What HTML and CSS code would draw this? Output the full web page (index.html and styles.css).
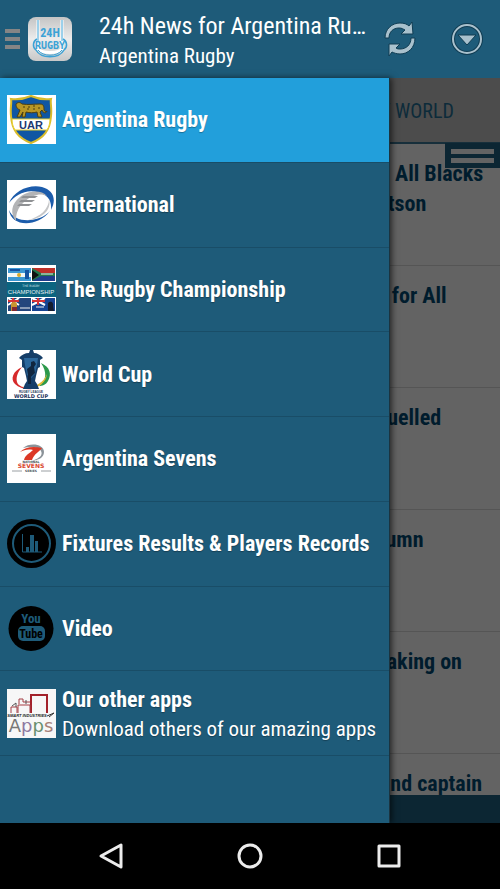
FILE: index.html
```html
<!DOCTYPE html>
<html lang="en">
<head>
    <meta charset="UTF-8">
    <meta name="viewport" content="width=device-width, initial-scale=1.0">
    <title>24h News for Argentina Rugby</title>
    <link rel="stylesheet" href="styles.css">
</head>
<body>
    <!-- Action bar -->
    <header class="topbar">
        <button class="icon-btn toggle" aria-label="Close menu">
            <span></span>
            <span></span>
            <span></span>
        </button>
        <svg class="logo" viewBox="0 0 46 46" aria-hidden="true">
            <defs>
                <linearGradient id="logoBg" x1="0" y1="0" x2="0" y2="1">
                    <stop offset="0" stop-color="#c4c4c4"/>
                    <stop offset=".5" stop-color="#ececec"/>
                    <stop offset="1" stop-color="#c8c8c8"/>
                </linearGradient>
            </defs>
            <rect x="1" y="1" width="44" height="44" rx="8" fill="url(#logoBg)"/>
            <path d="M11 4v28c0 6 24 6 24 0V4" fill="none" stroke="#fff" stroke-width="3"/>
            <path d="M11 4v21M35 4v21" stroke="#3ba2d6" stroke-width="1"/>
            <path d="M10 23c-4 2-5 8-1 11M36 23c4 2 5 8 1 11" fill="none" stroke="#3ba2d6" stroke-width="1.500"/>
            <path d="M11 34c5 7 19 7 24 0" fill="none" stroke="#3ba2d6" stroke-width="1"/>
            <path d="M9 34c5 9 23 9 28 0" fill="none" stroke="#3ba2d6" stroke-width="1.500"/>
            <text x="23" y="21" class="logo-top">24H</text>
            <text x="23" y="33" class="logo-bottom">RUGBY</text>
        </svg>
        <div class="titles">
            <h1>24h News for Argentina Ru…</h1>
            <p>Argentina Rugby</p>
        </div>
        <button class="icon-btn" aria-label="Refresh">
            <svg width="34" height="38" viewBox="0 0 34 38" aria-hidden="true">
                <g fill="#a9c1cd" stroke="#103c52" stroke-width="1">
                    <path d="M2 18C2 9 9 3 17 3c4 0 7 1 9 3l3-4 1 12H18l4-4c-2-1-3-2-6-2-6 0-10 4-10 10z"/>
                    <path d="M32 18c0 10-7 16-15 16-3 0-6-1-8-2l-3 4V24h11l-4 4c1 1 3 1 4 1 6 0 11-4 11-11z"/>
                </g>
            </svg>
        </button>
        <button class="icon-btn" aria-label="More options">
            <svg width="34" height="34" viewBox="0 0 34 34" aria-hidden="true">
                <circle cx="17" cy="17" r="14" fill="none" stroke="#103c52" stroke-width="4"/>
                <circle cx="17" cy="17" r="14" fill="none" stroke="#a9c1cd" stroke-width="2"/>
                <path d="M8 13h18l-9 10z" fill="#a9c1cd" stroke="#103c52" stroke-width="1"/>
            </svg>
        </button>
    </header>

    <main class="stage">
        <!-- News feed, dimmed under the drawer -->
        <section class="feed">
            <div class="tab">Y WORLD</div>
            <article><h2>s All Blacks<br>rtson</h2></article>
            <article><h2>t for All</h2></article>
            <article><h2>fuelled</h2></article>
            <article><h2>lumn</h2></article>
            <article><h2>taking on</h2></article>
            <article><h2>and captain</h2></article>
        </section>
        <div class="feed-footer"></div>
        <button class="feed-menu" aria-label="Sections">
            <span></span>
            <span></span>
        </button>

        <!-- Drawer -->
        <nav class="drawer">
            <ul>
                <li><a href="#" class="active">
                    <svg class="thumb" viewBox="0 0 49 49" aria-hidden="true">
                        <rect width="49" height="49" fill="#fff"/>
                        <path d="M4 4c7 1 13 0 20-3 7 3 13 4 20 3-1 4 1 8 0 17-1 14-7 22-20 27C11 43 5 35 4 21 3 12 5 8 4 4z" fill="#0f56a3" stroke="#d8bb2a" stroke-width="2"/>
                        <path d="M5 24h38c0 4-1 8-3 11H8c-2-3-3-7-3-11z" fill="#fff" stroke="#e8cf2c" stroke-width="1"/>
                        <path d="M9 9c2-2 4-2 6 0 6 1 12 0 18 0 4 0 4 3 4 6 1 2 2 2 3 1-1 3-4 2-5-1l-2 2 2 5h-4l-1-5c-4 1-7 1-11 0l-1 5h-3l1-5-3 5h-3l3-7c-2-1-4-2-4-6z" fill="#b79725" stroke="#4b3f12" stroke-width="1"/>
                        <path d="M16 12h2m3 0h2m3-1h2m3 2h2m-13 1h2m4 0h2" stroke="#4b3f12" stroke-width="1"/>
                        <text x="24" y="34" class="t-uar">UAR</text>
                    </svg>
                    <span class="label"><b>Argentina Rugby</b></span>
                </a></li>
                <li><a href="#">
                    <svg class="thumb" viewBox="0 0 49 49" aria-hidden="true">
                        <rect width="49" height="49" fill="#fff"/>
                        <path d="M2 23C7 11 22 4 35 7c11 3 15 12 9 23 1-10-4-16-14-18C19 9 8 15 2 23z" fill="#1c5cab"/>
                        <path d="M2 30c2 17 28 18 41 1-9 11-35 14-41-1z" fill="#1c5cab"/>
                        <path d="M40 16c-6-7-20-5-27 1-9 7-10 17-4 24 0-8 2-13 7-18 5-4 6-6 14-8 4-1 7 0 10 1z" fill="#b3b4b6"/>
                        <path d="M16 16h15l-3 2H14zm-2 4h14l-3 2H12zm-2 4h13l-3 2H10z" fill="#8f9194"/>
                        <path d="M42 19c0 10-9 18-21 21 14-1 24-10 21-21z" fill="#c5c6c8"/>
                    </svg>
                    <span class="label"><b>International</b></span>
                </a></li>
                <li><a href="#">
                    <svg class="thumb" viewBox="0 0 49 49" aria-hidden="true">
                        <rect width="49" height="49" fill="#fff"/>
                        <path d="M1 3h23v13H1z" fill="#3c97d2"/>
                        <path d="M1 8h23v4H1z" fill="#f4f7f5"/>
                        <circle cx="12" cy="10" r="2" fill="#d9a928"/>
                        <path d="M3 4h10v2H3zM18 5h4v9h-4z" fill="#1552a0"/>
                        <path d="M25 3h23v6H25z" fill="#bd2f28"/>
                        <path d="M25 10h23v6H25z" fill="#203d8d"/>
                        <path d="M25 3l9 5h14v3H34l-9 5z" fill="#23764b"/>
                        <path d="M25 5l7 5-7 5z" fill="#111"/>
                        <path d="M34 9h12" stroke="#eee" stroke-width="1"/>
                        <path d="M0 17h49v15H0z" fill="#0b6480"/>
                        <text x="24" y="22" class="t-small">THE RUGBY</text>
                        <text x="24" y="29" class="t-champ">CHAMPIONSHIP</text>
                        <path d="M1 33h23v13H1z" fill="#24457c"/>
                        <path d="M25 33h23v13H25z" fill="#164392"/>
                        <path d="M1 33l11 7m0-7L1 40m24-7l13 7m0-7l-13 7" stroke="#fff" stroke-width="2"/>
                        <path d="M6 33v7m-5-4h11m19-3v7m-6-4h13" stroke="#d63336" stroke-width="2"/>
                        <path d="M4 39c1-3 5-3 6 0v7H4z" fill="#c79531"/>
                        <path d="M5 42h5v4H5z" fill="#822832"/>
                        <path d="M41 38c3-3 6 0 5 3l1 5h-6z" fill="#151d2e"/>
                        <path d="M13 43h10m6-1h8" stroke="#f0f0f0" stroke-width="1"/>
                    </svg>
                    <span class="label"><b>The Rugby Championship</b></span>
                </a></li>
                <li><a href="#">
                    <svg class="thumb" viewBox="0 0 49 49" aria-hidden="true">
                        <rect width="49" height="49" fill="#fff"/>
                        <path d="M15 17C6 21 3 29 8 34c4 4 11 6 17 5-8-1-14-3-15-7s0-9 5-15z" fill="#d62a2b"/>
                        <path d="M34 13c9 4 11 11 7 18-2 4-6 5-9 5 8-6 8-14 2-23z" fill="#2c994b"/>
                        <path d="M14 36c10 4 22-2 26-12-1 11-14 18-26 12z" fill="#e3b833"/>
                        <path d="M23 0h3l1 3c3 0 7 2 9 5l-3 2v7l-2 1-2 8-1 5 2 3 2 5H16l2-5 2-3-1-5-2-8-2-1v-7l-3-2c2-3 6-5 10-5z" fill="#153e68"/>
                        <path d="M17 8h14l-1 7-2 9-4 4-4-3-2-10z" fill="#2b679b"/>
                        <path d="M24 12l3-1 2 3-2 3 1 6-4 4v7h-3v-9l-1-6 4-3z" fill="#10263f"/>
                        <text x="24" y="43" class="t-league">RUGBY LEAGUE</text>
                        <text x="24" y="48" class="t-cup">WORLD CUP</text>
                    </svg>
                    <span class="label"><b>World Cup</b></span>
                </a></li>
                <li><a href="#">
                    <svg class="thumb" viewBox="0 0 49 49" aria-hidden="true">
                        <rect width="49" height="49" fill="#fff"/>
                        <path d="M16 14c7-6 21-4 21 4 0 6-6 8-12 9 8-3 11-6 9-10-2-4-10-5-18-3z" fill="#8b9399"/>
                        <path d="M13 18c5-5 13-6 22-4-3 4-8 6-10 12h-8c1-5 6-7 9-10-5-1-9 0-13 2z" fill="#dc3826"/>
                        <text x="24" y="29" class="t-nat">NATIONAL</text>
                        <text x="24" y="34" class="t-sevens">SEVENS</text>
                        <text x="24" y="38" class="t-nat">SERIES</text>
                        <path d="M5 37h10m19 0h10" stroke="#9a9fa3" stroke-width="1"/>
                    </svg>
                    <span class="label"><b>Argentina Sevens</b></span>
                </a></li>
                <li><a href="#">
                    <svg class="thumb" viewBox="0 0 49 49" aria-hidden="true">
                        <circle cx="24.500" cy="24.500" r="24.500" fill="#000"/>
                        <circle cx="24.500" cy="24.500" r="18.500" fill="none" stroke="#1e5b79" stroke-width="2"/>
                        <path d="M15.500 15v18H35" fill="none" stroke="#1e5b79" stroke-width="1"/>
                        <path d="M19 28h3v5h-3zM23 16h4v17h-4zM28 22h3v11h-3z" fill="#1e5b79"/>
                    </svg>
                    <span class="label"><b>Fixtures Results &amp; Players Records</b></span>
                </a></li>
                <li><a href="#">
                    <svg class="thumb" viewBox="0 0 49 49" aria-hidden="true">
                        <circle cx="24" cy="24.500" r="22.500" fill="#000"/>
                        <rect x="11" y="22" width="27" height="15" rx="5" fill="#1e5b79"/>
                        <text x="24" y="19" class="t-you">You</text>
                        <text x="24" y="34" class="t-tube">Tube</text>
                    </svg>
                    <span class="label"><b>Video</b></span>
                </a></li>
                <li><a href="#">
                    <svg class="thumb" viewBox="0 0 49 49" aria-hidden="true">
                        <rect width="49" height="49" fill="#f7f7f7"/>
                        <path d="M24 24V6h16v18" fill="none" stroke="#a3222b" stroke-width="2"/>
                        <path d="M4 24v-6h6v6m1 0v-8h12v8m-11-9v-5h4v3h7" fill="none" stroke="#a53f45" stroke-width="1"/>
                        <path d="M5 17l4-3v4m10-7v4" fill="none" stroke="#555" stroke-width="1"/>
                        <path d="M40 27l7-3-5 4" fill="none" stroke="#333" stroke-width="1"/>
                        <text x="20" y="28" class="t-smart">SMART INDUSTRIES</text>
                        <text x="24" y="43" class="t-apps"><tspan fill="#777">A</tspan><tspan fill="#8e79a1">p</tspan><tspan fill="#68906f">p</tspan><tspan fill="#a68077">s</tspan></text>
                    </svg>
                    <span class="label"><b>Our other apps</b><small>Download others of our amazing apps</small></span>
                </a></li>
            </ul>
        </nav>
    </main>

    <!-- System navigation -->
    <footer class="navbar">
        <button aria-label="Back">
            <svg width="28" height="28" viewBox="0 0 28 28"><path d="M4 14L24 3v22z"/></svg>
        </button>
        <button aria-label="Home">
            <svg width="28" height="28" viewBox="0 0 28 28"><circle cx="14" cy="14" r="11"/></svg>
        </button>
        <button aria-label="Recent apps">
            <svg width="28" height="28" viewBox="0 0 28 28"><rect x="4" y="4" width="20" height="20"/></svg>
        </button>
    </footer>
</body>
</html>
```

FILE: styles.css
```css
* {
    box-sizing: border-box;
}
body {
    margin: 0;
    height: 100vh;
    display: flex;
    flex-direction: column;
    overflow: hidden;
    background-color: #000;
    font-family: 'Roboto Condensed', 'Liberation Sans Narrow', Roboto, sans-serif;
    color: #fff;
}
h1, h2, p, ul {
    margin: 0;
    padding: 0;
}
button {
    padding: 0;
    border: none;
    background: none;
    cursor: pointer;
}
svg {
    display: block;
}

/* Action bar */
.topbar {
    height: 78px;
    flex: none;
    display: flex;
    align-items: center;
    padding: 0 16px 0 5px;
    background-color: #1e5b79;
}
.toggle {
    display: flex;
    flex-direction: column;
    gap: 4px;
}
.toggle span {
    width: 15px;
    height: 4px;
    background-color: #858585;
}
.logo {
    width: 46px;
    height: 46px;
    margin-left: 7px;
}
.titles {
    flex: 1;
    min-width: 0;
    margin-left: 26px;
    padding-top: 2px;
    white-space: nowrap;
}
.titles h1 {
    font-size: 24px;
    line-height: 32px;
    font-weight: 400;
}
.titles p {
    font-size: 21px;
    line-height: 28px;
}
.topbar .icon-btn + .icon-btn {
    margin-left: 33px;
}

.stage {
    position: relative;
    flex: 1;
    min-height: 0;
    display: flex;
    flex-direction: column;
}

/* Feed */
.feed {
    flex: 1;
    min-height: 0;
    overflow: hidden;
    background-color: #636363;
    color: #001c2d;
}
.tab {
    height: 66px;
    padding-left: 76%;
    border-bottom: 2px solid #172f3b;
    background-color: #4c4c4c;
    color: #0d2b3a;
    font-size: 20px;
    line-height: 66px;
}
.feed article {
    height: 122px;
    padding: 15px 0 0 76%;
    border-bottom: 1px solid #555;
}
.feed h2 {
    font-size: 22px;
    line-height: 30px;
    font-weight: 700;
    white-space: nowrap;
}
.feed-footer {
    height: 28px;
    flex: none;
    background-color: #0c2633;
}
.feed-menu {
    position: absolute;
    top: 65px;
    right: 0;
    width: 55px;
    height: 25px;
    padding: 0 6px;
    display: flex;
    flex-direction: column;
    justify-content: center;
    gap: 4px;
    background-color: #0c2633;
}
.feed-menu span {
    width: 100%;
    height: 5px;
    background-color: #636363;
}

/* Drawer */
.drawer {
    position: absolute;
    top: 0;
    bottom: 0;
    left: 0;
    width: 78%;
    background-color: #1e5b79;
    border-right: 1px solid #1b3440;
    box-shadow: 2px 0 6px rgba(0, 0, 0, 0.6);
}
.drawer ul {
    height: 91%;
    display: flex;
    flex-direction: column;
    list-style: none;
}
.drawer li {
    flex: 1;
}
.drawer a {
    height: 100%;
    display: flex;
    align-items: center;
    gap: 6px;
    padding: 0 7px;
    border-bottom: 1px solid #194d67;
    color: #fff;
    text-decoration: none;
}
.drawer a.active {
    background-color: #229fdb;
}
.thumb {
    width: 49px;
    height: 49px;
    flex: none;
}
.label {
    padding-top: 1px;
    white-space: nowrap;
    font-size: 22px;
    line-height: 30px;
    text-shadow: 0 1px 1px rgba(0, 0, 0, 0.3);
}
.label b, .label small {
    display: block;
}
.label small {
    font-size: 21px;
    line-height: 28px;
}

/* Lettering inside the thumbnails */
svg text {
    text-anchor: middle;
}
.logo-top {
    font-size: 12px;
    font-weight: 700;
    fill: #3ba2d6;
}
.logo-bottom {
    font: 700 10px 'DejaVu Sans Mono', monospace;
    fill: #3ba2d6;
}
.t-uar {
    font: 700 11px 'Liberation Sans', sans-serif;
    fill: #1d3870;
}
.t-small {
    font: 3px 'DejaVu Sans', sans-serif;
    fill: #d7e5e9;
}
.t-champ {
    font: 6px 'Liberation Sans', sans-serif;
    fill: #e3eef0;
}
.t-league {
    font: 700 3px 'Liberation Sans', sans-serif;
    fill: #24375b;
}
.t-cup {
    font: 700 5px 'DejaVu Sans', sans-serif;
    fill: #1d315a;
}
.t-nat {
    font: 700 3px 'DejaVu Sans', sans-serif;
    fill: #424b51;
}
.t-sevens {
    font: 700 6px 'DejaVu Sans', sans-serif;
    fill: #d9472f;
}
.t-you {
    font-size: 13px;
    font-weight: 700;
    fill: #1e5b79;
}
.t-tube {
    font-size: 12px;
    font-weight: 700;
    fill: #000;
}
.t-smart {
    font: italic 700 4px 'Liberation Sans', sans-serif;
    fill: #222;
}
.t-apps {
    font: 18px 'DejaVu Sans', sans-serif;
}

/* System navigation */
.navbar {
    height: 66px;
    flex: none;
    display: flex;
    justify-content: space-between;
    align-items: center;
    padding: 0 97px;
    background-color: #000;
}
.navbar svg {
    fill: none;
    stroke: #ececec;
    stroke-width: 3;
    stroke-linejoin: round;
}
```
